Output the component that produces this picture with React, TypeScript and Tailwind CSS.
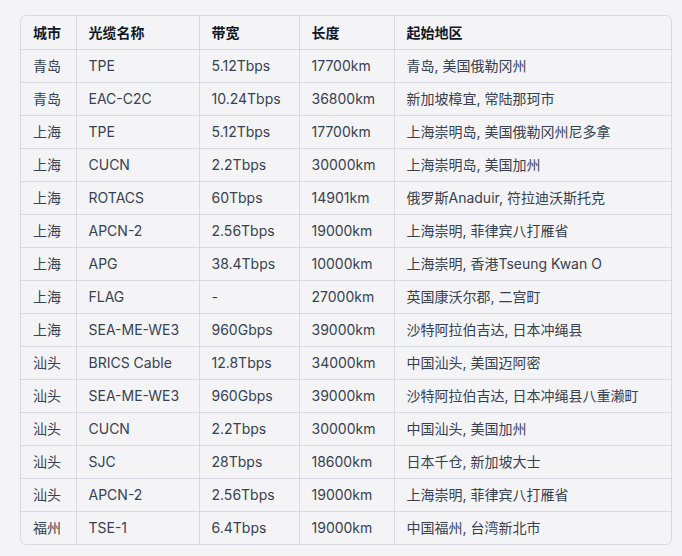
import React from "react";

const rows: string[][] = [
  ["青岛", "TPE", "5.12Tbps", "17700km", "青岛, 美国俄勒冈州"],
  ["青岛", "EAC-C2C", "10.24Tbps", "36800km", "新加坡樟宜, 常陆那珂市"],
  ["上海", "TPE", "5.12Tbps", "17700km", "上海崇明岛, 美国俄勒冈州尼多拿"],
  ["上海", "CUCN", "2.2Tbps", "30000km", "上海崇明岛, 美国加州"],
  ["上海", "ROTACS", "60Tbps", "14901km", "俄罗斯Anaduir, 符拉迪沃斯托克"],
  ["上海", "APCN-2", "2.56Tbps", "19000km", "上海崇明, 菲律宾八打雁省"],
  ["上海", "APG", "38.4Tbps", "10000km", "上海崇明, 香港Tseung Kwan O"],
  ["上海", "FLAG", "-", "27000km", "英国康沃尔郡, 二宫町"],
  ["上海", "SEA-ME-WE3", "960Gbps", "39000km", "沙特阿拉伯吉达, 日本冲绳县"],
  ["汕头", "BRICS Cable", "12.8Tbps", "34000km", "中国汕头, 美国迈阿密"],
  ["汕头", "SEA-ME-WE3", "960Gbps", "39000km", "沙特阿拉伯吉达, 日本冲绳县八重濑町"],
  ["汕头", "CUCN", "2.2Tbps", "30000km", "中国汕头, 美国加州"],
  ["汕头", "SJC", "28Tbps", "18600km", "日本千仓, 新加坡大士"],
  ["汕头", "APCN-2", "2.56Tbps", "19000km", "上海崇明, 菲律宾八打雁省"],
  ["福州", "TSE-1", "6.4Tbps", "19000km", "中国福州, 台湾新北市"],
];

const headers = ["城市", "光缆名称", "带宽", "长度", "起始地区"];
const widths = ["w-[55px]", "w-[123px]", "w-[100px]", "w-[95px]", "w-[277px]"];

export default function App() {
  return (
    <div
      className="w-[682px] h-[556px] bg-[#f4f4f6] pt-[15px] pl-[20px]"
      style={{ fontFamily: "Inter, 'Noto Sans CJK SC', sans-serif" }}
    >
      <div className="w-[652px] rounded-[6px] border border-[#d9d9e3] overflow-hidden">
        <table className="border-collapse table-fixed w-[650px] text-[14px] text-[#374151]">
          <colgroup>
            {widths.map((w, i) => (
              <col key={i} className={w} />
            ))}
          </colgroup>
          <thead>
            <tr className="h-[33px]">
              {headers.map((h, i) => (
                <th
                  key={i}
                  className={`text-left font-semibold text-[#111827] pl-[12px] p-0 border-b border-[#d9d9e3] ${
                    i < 4 ? "border-r" : ""
                  }`}
                >
                  {h}
                </th>
              ))}
            </tr>
          </thead>
          <tbody>
            {rows.map((r, ri) => (
              <tr key={ri} className="h-[33px]">
                {r.map((c, ci) => (
                  <td
                    key={ci}
                    className={`pl-[12px] p-0 border-[#d9d9e3] whitespace-nowrap ${
                      ci < 4 ? "border-r" : ""
                    } ${ri < rows.length - 1 ? "border-b" : ""}`}
                  >
                    {c}
                  </td>
                ))}
              </tr>
            ))}
          </tbody>
        </table>
      </div>
    </div>
  );
}
